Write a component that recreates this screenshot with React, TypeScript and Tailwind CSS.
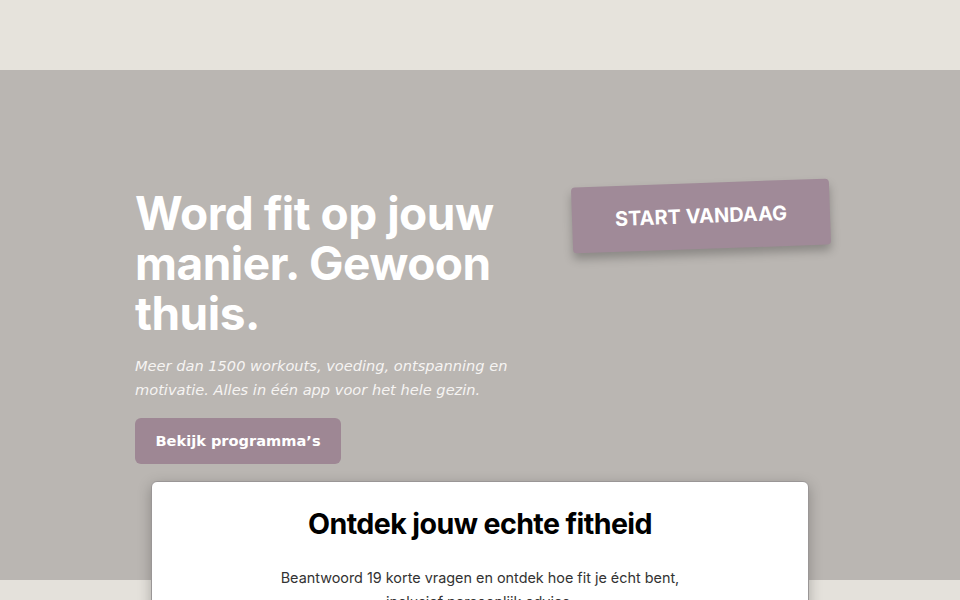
import React from 'react';

const heading = { fontFamily: 'Inter, "Noto Sans", sans-serif' };
const body = { fontFamily: '"DejaVu Sans", sans-serif' };

export default function App() {
  return (
    <div className="min-h-screen bg-[#e4e1db]">
      {/* top bar */}
      <div className="h-[70px] bg-[#e6e3dc]" />

      {/* hero */}
      <section className="bg-[#bab6b2] h-[510px]">
        <div className="mx-[135px] pt-[118px] flex items-start justify-between">
          <div className="w-[400px]">
            <h1
              style={heading}
              className="text-[46px] leading-[50px] font-bold text-white tracking-[-0.5px]"
            >
              Word fit op jouw manier. Gewoon thuis.
            </h1>
            <p style={body} className="mt-[16px] text-[14.6px] leading-[24px] italic text-[#f6f4f2] w-[390px]">
              Meer dan 1500 workouts, voeding, ontspanning en motivatie. Alles in één app voor het hele gezin.
            </p>
            <button
              style={body}
              className="mt-[16px] h-[46px] w-[206px] rounded-md bg-[#9e8794] text-white text-[14.6px] font-bold"
            >
              Bekijk programma’s
            </button>
          </div>
          <div className="-mr-[5px] -mt-[5px]">
            <div
              style={heading}
              className="w-[258px] h-[66px] -rotate-2 rounded-sm bg-[#a08a98] shadow-[0_6px_10px_rgba(0,0,0,0.25)] flex items-center justify-center text-white text-[20px] font-bold"
            >
              START VANDAAG
            </div>
          </div>
        </div>
      </section>

      {/* quiz card */}
      <div className="-mt-[99px] flex justify-center">
        <div className="w-[658px] h-[200px] bg-white rounded-t-md border border-[#9a9696] shadow-[0_4px_14px_rgba(0,0,0,0.25)] text-center pt-[24px]">
          <h2 style={heading} className="text-[28.6px] leading-[36px] font-bold text-black tracking-[-0.6px]">
            Ontdek jouw echte fitheid
          </h2>
          <p style={heading} className="mt-[24px] text-[14.4px] leading-[24px] text-[#333] w-[420px] mx-auto">
            Beantwoord 19 korte vragen en ontdek hoe fit je écht bent, inclusief persoonlijk advies.
          </p>
        </div>
      </div>
    </div>
  );
}
